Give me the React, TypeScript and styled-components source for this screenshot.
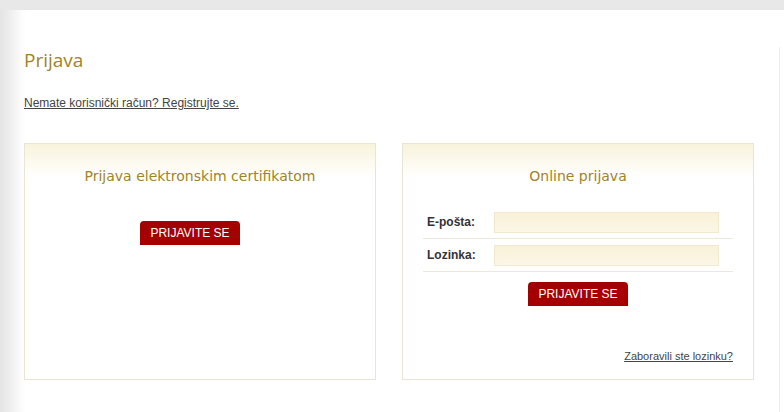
import React from 'react';
import styled, { createGlobalStyle } from 'styled-components';

const GlobalStyle = createGlobalStyle`
  body {
    margin: 0;
    background: #fff;
    font-family: "Liberation Sans", Arial, sans-serif;
    overflow: hidden;
  }
`;

const TopBar = styled.div`
  height: 10px;
  background: #e8e8e8;
`;

const Main = styled.div`
  width: 780px;
  height: 402px;
  box-sizing: border-box;
  padding-top: 37px;
  background: linear-gradient(to right, #e4e4e4 0, #ececec 8px, #fafafa 20px, #fff 26px);
`;

const Frame = styled.div`
  height: 365px;
  box-sizing: border-box;
  border-right: 1px solid #ececec;
  padding: 0 0 0 24px;
`;

const Title = styled.h1`
  margin: 0;
  font-family: "Open Sans", "DejaVu Sans", sans-serif;
  font-weight: 400;
  font-size: 19px;
  line-height: 26px;
  color: #a08426;
`;

const RegisterLink = styled.a`
  display: inline-block;
  margin-top: 23px;
  font-size: 12px;
  line-height: 14px;
  color: #444;
  text-decoration: underline;
`;

const Panels = styled.div`
  display: flex;
  gap: 26px;
  margin-top: 32px;
`;

const Panel = styled.section`
  width: 352px;
  height: 237px;
  box-sizing: border-box;
  border: 1px solid #e8e5d5;
  background: linear-gradient(to bottom, #f8f3dc 0, #fdfbf2 22px, #fff 34px);
  display: flex;
  flex-direction: column;
`;

const PanelTitle = styled.h2`
  margin: 23px 0 0;
  text-align: center;
  font-family: "DejaVu Sans", Verdana, sans-serif;
  font-weight: 400;
  font-size: 14px;
  line-height: 18px;
  color: #a08426;
`;

const Button = styled.button<{ $offset?: number }>`
  width: 100px;
  height: 24px;
  padding: 0;
  border: none;
  border-radius: 4px 4px 0 0;
  background: #a50000;
  color: #fff;
  font-family: "Liberation Sans", Arial, sans-serif;
  font-size: 12px;
  line-height: 24px;
  cursor: pointer;
  align-self: ${p => (p.$offset !== undefined ? 'flex-start' : 'center')};
  margin-left: ${p => (p.$offset !== undefined ? `${p.$offset}px` : '0')};
`;

const CertButton = styled(Button)`
  margin-top: 36px;
`;

const Form = styled.form`
  display: flex;
  flex-direction: column;
  margin: 21px 20px 0;
`;

const Row = styled.div`
  display: flex;
  align-items: center;
  height: 32px;
  border-bottom: 1px solid #ece8da;
`;

const Label = styled.label`
  width: 67px;
  padding-left: 4px;
  font-size: 12px;
  font-weight: 700;
  color: #333;
`;

const Input = styled.input`
  width: 225px;
  height: 21px;
  box-sizing: border-box;
  border: 1px solid #f0e9d0;
  background: linear-gradient(to bottom, #f9f1d8, #fbf6e6);
  outline: none;
`;

const LoginButton = styled(Button)`
  margin-top: 10px;
`;

const Forgot = styled.a`
  align-self: flex-end;
  margin-top: 44px;
  font-size: 11px;
  color: #444;
  text-decoration: underline;
`;

const App: React.FC = () => {
  return (
    <>
      <GlobalStyle />
      <TopBar />
      <Main>
        <Frame>
          <Title>Prijava</Title>
          <RegisterLink href="#">Nemate korisnički račun? Registrujte se.</RegisterLink>
          <Panels>
            <Panel>
              <PanelTitle>Prijava elektronskim certifikatom</PanelTitle>
              <CertButton type="button" $offset={115}>PRIJAVITE SE</CertButton>
            </Panel>
            <Panel>
              <PanelTitle>Online prijava</PanelTitle>
              <Form onSubmit={e => e.preventDefault()}>
                <Row>
                  <Label htmlFor="email">E-pošta:</Label>
                  <Input id="email" type="text" />
                </Row>
                <Row>
                  <Label htmlFor="password">Lozinka:</Label>
                  <Input id="password" type="password" />
                </Row>
                <LoginButton type="submit">PRIJAVITE SE</LoginButton>
                <Forgot href="#">Zaboravili ste lozinku?</Forgot>
              </Form>
            </Panel>
          </Panels>
        </Frame>
      </Main>
    </>
  );
};

export default App;
